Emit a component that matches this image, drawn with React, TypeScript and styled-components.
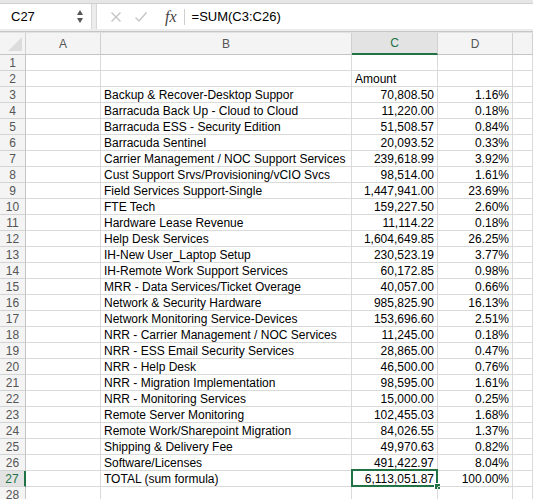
import React from "react";
import styled, { createGlobalStyle, css } from "styled-components";

const GREEN = "#217346";
const GRID = "#dadada";

const GlobalStyle = createGlobalStyle`
  html, body { margin: 0; padding: 0; background: #ffffff; }
  body { font-family: "Liberation Sans", Arial, sans-serif; overflow: hidden; }
`;

const rows: [string, string, string][] = [
  ["Backup & Recover-Desktop Suppor", "70,808.50", "1.16%"],
  ["Barracuda Back Up - Cloud to Cloud", "11,220.00", "0.18%"],
  ["Barracuda ESS - Security Edition", "51,508.57", "0.84%"],
  ["Barracuda Sentinel", "20,093.52", "0.33%"],
  ["Carrier Management / NOC Support Services", "239,618.99", "3.92%"],
  ["Cust Support Srvs/Provisioning/vCIO Svcs", "98,514.00", "1.61%"],
  ["Field Services Support-Single", "1,447,941.00", "23.69%"],
  ["FTE Tech", "159,227.50", "2.60%"],
  ["Hardware Lease Revenue", "11,114.22", "0.18%"],
  ["Help Desk Services", "1,604,649.85", "26.25%"],
  ["IH-New User_Laptop Setup", "230,523.19", "3.77%"],
  ["IH-Remote Work Support Services", "60,172.85", "0.98%"],
  ["MRR - Data Services/Ticket Overage", "40,057.00", "0.66%"],
  ["Network & Security Hardware", "985,825.90", "16.13%"],
  ["Network Monitoring Service-Devices", "153,696.60", "2.51%"],
  ["NRR - Carrier Management / NOC Services", "11,245.00", "0.18%"],
  ["NRR - ESS Email Security Services", "28,865.00", "0.47%"],
  ["NRR - Help Desk", "46,500.00", "0.76%"],
  ["NRR - Migration Implementation", "98,595.00", "1.61%"],
  ["NRR - Monitoring Services", "15,000.00", "0.25%"],
  ["Remote Server Monitoring", "102,455.03", "1.68%"],
  ["Remote Work/Sharepoint Migration", "84,026.55", "1.37%"],
  ["Shipping & Delivery Fee", "49,970.63", "0.82%"],
  ["Software/Licenses", "491,422.97", "8.04%"],
  ["TOTAL (sum formula)", "6,113,051.87", "100.00%"],
];

const columns = "26px 75px 251px 86px 75px 1fr";

const Window = styled.div`
  width: 533px;
  height: 499px;
  overflow: hidden;
  background: #ffffff;
  color: #000;
`;

const TopStrip = styled.div`
  height: 3px;
  background: #e6e6e6;
  border-bottom: 1px solid #d0d0d0;
`;

const FormulaBar = styled.div`
  display: flex;
  height: 25px;
  background: #ececec;
  gap: 4px;
  border-bottom: 2px solid #ececec;
`;

const NameBox = styled.div`
  width: 92px;
  box-sizing: border-box;
  display: flex;
  align-items: center;
  justify-content: space-between;
  padding: 0 8px 0 11px;
  background: #ffffff;
  border-right: 1px solid #d6d6d6;
  font-size: 13px;
`;

const Stepper = styled.div`
  display: flex;
  flex-direction: column;
  gap: 3px;
  align-items: center;
`;

const Arrow = styled.span<{ $down?: boolean }>`
  width: 0;
  height: 0;
  border-left: 3.5px solid transparent;
  border-right: 3.5px solid transparent;
  ${(p) =>
    p.$down
      ? css`border-top: 5px solid #555;`
      : css`border-bottom: 5px solid #555;`}
`;

const FormulaField = styled.div`
  flex: 1;
  display: flex;
  align-items: center;
  background: #ffffff;
  border-left: 1px solid #d6d6d6;
  padding-left: 6px;
`;

const IconButton = styled.span`
  width: 25px;
  display: flex;
  justify-content: center;
  align-items: center;
`;

const Fx = styled.span`
  font-family: "Liberation Serif", "Times New Roman", serif;
  font-style: italic;
  font-size: 16px;
  color: #444;
  padding: 0 7px 0 12px;
  border-right: 1px solid #cfcfcf;
  line-height: 16px;
`;

const FormulaText = styled.span`
  font-size: 13px;
  padding-left: 7px;
`;

const Divider = styled.div`
  height: 1px;
  background: #c6c6c6;
  border-bottom: 1px solid #e2e2e2;
`;

const Sheet = styled.div`
  display: grid;
  grid-template-columns: ${columns};
  grid-template-rows: 22px;
  grid-auto-rows: 16px;
  font-size: 12px;
`;

const HeaderCell = styled.div<{ $active?: boolean }>`
  box-sizing: border-box;
  display: flex;
  align-items: center;
  justify-content: center;
  background: ${(p) => (p.$active ? "#e3e3e3" : "#f4f4f4")};
  color: ${(p) => (p.$active ? GREEN : "#555")};
  border-right: 1px solid #d0d0d0;
  border-bottom: ${(p) => (p.$active ? `2px solid ${GREEN}` : "1px solid #c4c4c4")};
  font-size: 12px;
`;

const Corner = styled(HeaderCell)`
  position: relative;
  &::after {
    content: "";
    position: absolute;
    right: 3px;
    bottom: 3px;
    border-left: 14px solid transparent;
    border-bottom: 14px solid #dcdcdc;
  }
`;

const RowHead = styled.div<{ $active?: boolean }>`
  box-sizing: border-box;
  display: flex;
  align-items: center;
  justify-content: center;
  font-size: 12px;
  background: ${(p) => (p.$active ? "#e3e3e3" : "#f4f4f4")};
  color: ${(p) => (p.$active ? GREEN : "#555")};
  border-right: ${(p) => (p.$active ? `2px solid ${GREEN}` : "1px solid #c4c4c4")};
  border-bottom: 1px solid #d4d4d4;
`;

const Cell = styled.div<{ $align?: "left" | "right"; $selected?: boolean }>`
  position: relative;
  box-sizing: border-box;
  border-right: 1px solid ${GRID};
  border-bottom: 1px solid ${GRID};
  padding: 0 3px;
  white-space: nowrap;
  overflow: visible;
  text-align: ${(p) => p.$align ?? "left"};
  line-height: 16px;
  ${(p) =>
    p.$selected &&
    css`
      &::before {
        content: "";
        position: absolute;
        inset: -2px -1px -1px -1px;
        border: 2px solid ${GREEN};
        pointer-events: none;
      }
      &::after {
        content: "";
        position: absolute;
        right: -4px;
        bottom: -4px;
        width: 5px;
        height: 5px;
        background: ${GREEN};
        border: 1px solid #fff;
      }
    `}
`;

const XIcon = () => (
  <svg width="12" height="12" viewBox="0 0 12 12">
    <path d="M1.5 1.5 L10.5 10.5 M10.5 1.5 L1.5 10.5" stroke="#c4c4c4" strokeWidth="1.4" fill="none" />
  </svg>
);

const CheckIcon = () => (
  <svg width="14" height="12" viewBox="0 0 14 12">
    <path d="M1.5 6.5 L5 10 L12.5 1.5" stroke="#c4c4c4" strokeWidth="1.4" fill="none" />
  </svg>
);

export default function App() {
  const activeRow = 27;
  const total = 28;
  const body: React.ReactNode[] = [];
  for (let r = 1; r <= total; r++) {
    const data = r >= 3 && r <= 27 ? rows[r - 3] : null;
    const isActive = r === activeRow;
    body.push(
      <React.Fragment key={r}>
        <RowHead $active={isActive}>{r}</RowHead>
        <Cell />
        <Cell>{data ? data[0] : ""}</Cell>
        <Cell $align={r === 2 ? "left" : "right"} $selected={isActive}>
          {r === 2 ? "Amount" : data ? data[1] : ""}
        </Cell>
        <Cell $align="right">{data ? data[2] : ""}</Cell>
        <Cell />
      </React.Fragment>
    );
  }

  return (
    <>
      <GlobalStyle />
      <Window>
        <TopStrip />
        <FormulaBar>
          <NameBox>
            C27
            <Stepper>
              <Arrow />
              <Arrow $down />
            </Stepper>
          </NameBox>
          <FormulaField>
            <IconButton>
              <XIcon />
            </IconButton>
            <IconButton>
              <CheckIcon />
            </IconButton>
            <Fx>fx</Fx>
            <FormulaText>=SUM(C3:C26)</FormulaText>
          </FormulaField>
        </FormulaBar>
        <Divider />
        <Sheet>
          <Corner />
          <HeaderCell>A</HeaderCell>
          <HeaderCell>B</HeaderCell>
          <HeaderCell $active>C</HeaderCell>
          <HeaderCell>D</HeaderCell>
          <HeaderCell />
          {body}
        </Sheet>
      </Window>
    </>
  );
}
